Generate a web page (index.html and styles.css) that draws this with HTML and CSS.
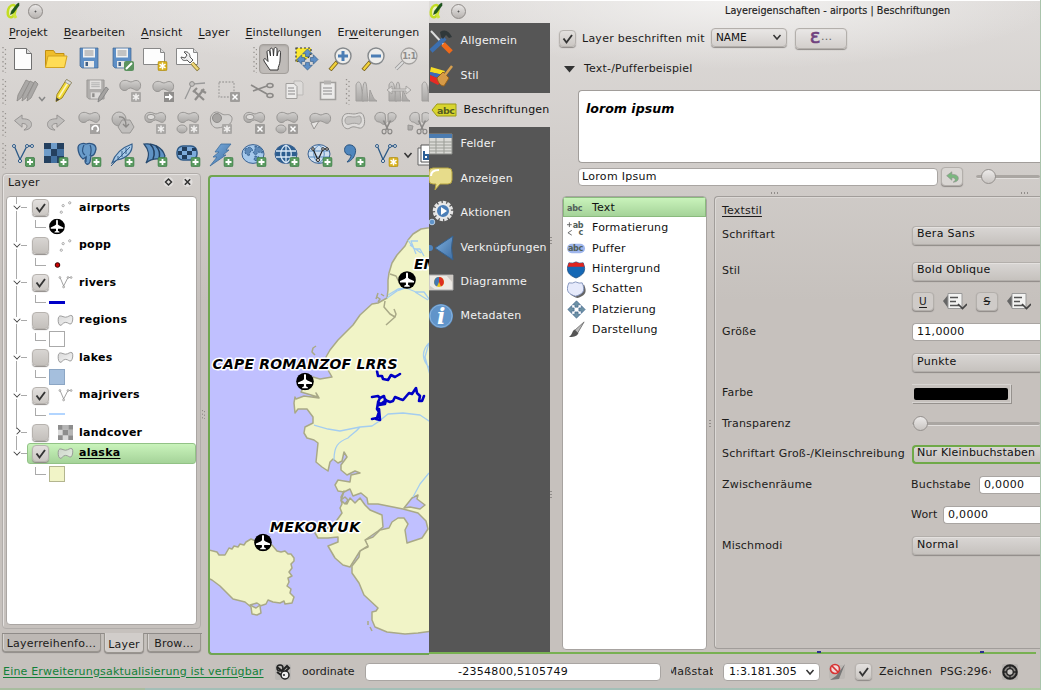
FILE: index.html
```html
<!DOCTYPE html>
<html lang="de">
<head>
<meta charset="utf-8">
<title>Layereigenschaften - airports | Beschriftungen</title>
<link rel="stylesheet" href="styles.css">
</head>
<body>
<svg class="defs" width="0" height="0" aria-hidden="true">
<defs>
<linearGradient id="gGrey" x1="0" y1="0" x2="0" y2="1"><stop offset="0" stop-color="#d2d0ce"/><stop offset="1" stop-color="#a9a7a5"/></linearGradient>
<linearGradient id="gLight" x1="0" y1="0" x2="1" y2="1"><stop offset="0" stop-color="#cfcfcf"/><stop offset="1" stop-color="#f2f2f2"/></linearGradient>
<linearGradient id="gBlue" x1="0" y1="0" x2="1" y2="1"><stop offset="0" stop-color="#7fb0de"/><stop offset="1" stop-color="#3d6ea5"/></linearGradient>
</defs>
<symbol id="plus" viewBox="0 0 10 10"><rect x=".4" y=".4" width="9.2" height="9.2" rx="1.5" fill="#5a9a60" stroke="#3d7c48" stroke-width=".8"/><path d="M5 2v6M2 5h6" stroke="#fff" stroke-width="1.8"/></symbol>
<symbol id="star" viewBox="0 0 10 10"><rect x=".4" y=".4" width="9.2" height="9.2" rx="1.5" fill="#d9b21c" stroke="#b08d10" stroke-width=".8"/><path d="M5 1.5v7M2 3.2l6 3.6M8 3.2L2 6.800" stroke="#fff" stroke-width="1.5"/></symbol>
<symbol id="gstar" viewBox="0 0 10 10"><rect width="10" height="10" rx="1" fill="#aaa8a6"/><path d="M5 1.500v7M2 3.200l6 3.600M8 3.200L2 6.800" stroke="#f1f0ef" stroke-width="1.500"/></symbol>
<symbol id="gx" viewBox="0 0 10 10"><rect width="10" height="10" rx="1" fill="#9f9d9b"/><path d="M2.500 2.500l5 5M7.500 2.500l-5 5" stroke="#fff" stroke-width="1.500"/></symbol>
<symbol id="blob" viewBox="0 0 24 14"><path d="M2 5C3 1 8 .5 11 2.500c3 1.500 4-1 7-1 5 0 5.500 6 3.500 8.500-3 3.500-5-.5-9-1-3 0-3 3-6.500 2.500C2.500 11 1.500 8 2 5z" fill="url(#gGrey)" stroke="#989694"/></symbol>
<symbol id="vec" viewBox="0 0 24 24"><path d="M3.500 4.500l5.500 13L16 4h4" fill="none" stroke="currentColor" stroke-width="1.300"/><g fill="#e8e6e4" stroke="currentColor"><circle cx="3" cy="4" r="1.500"/><circle cx="9" cy="19" r="1.600"/><circle cx="16" cy="4" r="1.500"/><circle cx="21" cy="4" r="1.500"/></g></symbol>
<symbol id="floppy" viewBox="0 0 20 22"><path d="M1 1h18v20H3l-2-2z" fill="currentColor" stroke="#3e648f" stroke-opacity=".7"/><path d="M4 1.500h12v9H4z" fill="#f2f2f2"/><path d="M5.500 4h9M5.500 6h9M5.500 8h9" stroke="#888" stroke-width=".9"/><path d="M5 14h10v6.500H5z" fill="#e9e9e9"/><path d="M6.500 15h2.500v4H6.500z" fill="#3f5f85"/></symbol>
<symbol id="gfloppy" viewBox="0 0 20 22"><path d="M1 1h18v20H3l-2-2z" fill="#b0aeac" stroke="#9a9896"/><path d="M4 1.500h12v9H4z" fill="#e2e0de"/><path d="M5.500 4h9M5.500 6h9M5.500 8h9" stroke="#aaa" stroke-width=".9"/><path d="M5 14h10v6.500H5z" fill="#dddbd9"/><path d="M6.500 15h2.500v4H6.500z" fill="#8f8d8b"/></symbol>
<symbol id="handle" viewBox="0 0 5 27"><path d="M1.500 1v26M4 3v24" stroke="#96928e" stroke-width="1.300" stroke-dasharray="1.300 3.400"/></symbol>
<symbol id="chev" viewBox="0 0 10 8"><path d="M1.500 2L5 6l3.500-4" fill="none" stroke="#333" stroke-width="1.500"/></symbol>
<symbol id="airport" viewBox="0 0 18 18"><circle cx="9" cy="9" r="8.800" fill="#000"/><path d="M9 1.500c.8 0 1 .8 1 1.700v3.600l1.500 1.200 4.500 2v1.500h-5.800l-.2 2.300 1.800 1v.9H6.200v-.9l1.800-1-.2-2.300H2V10l4.500-2L8 6.800V3.200c0-.9.200-1.700 1-1.700z" fill="#fff"/></symbol>
<symbol id="qgis" viewBox="0 0 14 18"><path d="M7.500 3C4 3 2 6.500 1.800 10c-.2 3.500 1 5.500 3.400 5.200 3.800-.5 6.300-12.200 2.300-12.200z" fill="#eef3c0" stroke="#c3dd22" stroke-width="2.600"/><path d="M7 10.500l3 5.500" stroke="#cfe63c" stroke-width="2.800"/><path d="M4.500 12.500l1-3.500L11 2l2-1v2.500L7.500 11z" fill="#1c5a1c" stroke="#143f14" stroke-width=".5"/></symbol>
<symbol id="lens" viewBox="0 0 24 24"><path d="M9.500 14.500L2 23" stroke="#77601a" stroke-width="4"/><path d="M8.500 15.500L2.500 22.500" stroke="#f2d23a" stroke-width="2.400"/><circle cx="15" cy="9" r="8" fill="#eeeeec" stroke="#85898c" stroke-width="1.400"/></symbol>
<symbol id="globe" viewBox="0 0 24 20"><ellipse cx="12" cy="10" rx="11" ry="9.400" fill="currentColor" stroke="#3a6190"/></symbol>
<symbol id="scissor" viewBox="0 0 12 12"><path d="M3 0l4 8M9 0L5 8" stroke="#8b8987" stroke-width="1.400"/><ellipse cx="3.500" cy="9.500" rx="1.700" ry="2" fill="none" stroke="#8b8987"/><ellipse cx="8.500" cy="9.500" rx="1.700" ry="2" fill="none" stroke="#8b8987"/></symbol>
<symbol id="hist" viewBox="0 0 24 24"><path d="M2 22V6c1-4 4-4 5 0l1 6 2 10z" fill="url(#gGrey)" stroke="#a19f9d"/><path d="M8 22c0-8 1-19 3-19s2 12 3 19zM15 22l1-11c3 7 4 10 7 11z" fill="url(#gGrey)" stroke="#a19f9d"/></symbol>
<symbol id="four" viewBox="0 0 24 24"><g fill="currentColor" stroke="#315a85" stroke-width=".7"><path d="M12 1l5 5h-3v3h-4V6H7z"/><path d="M12 23l5-5h-3v-3h-4v3H7z"/><path d="M1 12l5-5v3h3v4H6v3z"/><path d="M23 12l-5-5v3h-3v4h3v3z"/></g></symbol>
<symbol id="undo" viewBox="0 0 20 18"><path d="M1 7l8-6v4c8 0 10 3 10 6 0 4-4 6-8 6 5-3 4-7-2-7v4z" fill="currentColor" stroke="#8f8d8b" stroke-width=".9"/></symbol>
<symbol id="rasterIcon" viewBox="0 0 16 16"><path d="M0 0h16v16H0z" fill="#dadada"/><path d="M0 0h5v5H0zM11 0h5v5h-5zM5 5h6v6H5zM0 11h5v5H0zM11 11h5v5h-5z" fill="#8d8d8d"/><path d="M5 0h6v5H5zM11 5h5v6h-5z" fill="#b5b5b5"/></symbol>
<symbol id="points" viewBox="0 0 16 16"><g fill="#fff" stroke="#999" stroke-width=".9"><circle cx="3.500" cy="13" r="1.200"/><circle cx="5.500" cy="6" r="1.200"/><circle cx="12.500" cy="3" r="1.200"/></g></symbol>
<symbol id="poly" viewBox="0 0 18 14"><path d="M1.500 4C3 .5 5 3 9 3.500c3 0 5-3 7-1.500 1.500 2 .5 7-1 8.500-2 1-3-1.500-6-1.500s-4 4-6 3C1 10.500 1 6 1.500 4z" fill="url(#gLight)" fill-opacity=".8" stroke="#8f8f8f" stroke-width=".9"/></symbol>
<symbol id="definedIcon" viewBox="0 0 24 20"><path d="M0 9l5-6v13z" fill="#666"/><path d="M5 1.500h14v15H5z" fill="#f3f3f2" stroke="#999"/><path d="M7 5.500h8M7 9.500h6M7 13.500h9" stroke="#555" stroke-width="1.500"/><path d="M15 12l4.500 4.500L24 12" fill="none" stroke="#444" stroke-width="1.700"/></symbol>
</svg>

<div class="screen">
<main class="app">
  <header class="titlebar"><svg width="14" height="18"><use href="#qgis"/></svg><span class="knob"></span></header>
  <nav class="menubar"><span><u>P</u>rojekt</span><span><u>B</u>earbeiten</span><span><u>A</u>nsicht</span><span><u>L</u>ayer</span><span><u>E</u>instellungen</span><span>Er<u>w</u>eiterungen</span></nav>

  <div class="toolbar">
    <svg class="grip"><use href="#handle"/></svg>
    <svg class="ic" viewBox="0 0 24 24"><path d="M3.500 1.500h12l5 5v16h-17z" fill="#fdfdfd" stroke="#707070"/><path d="M15.500 1.500v5h5" fill="#ddd" stroke="#707070"/></svg>
    <svg class="ic" viewBox="0 0 24 24"><path d="M1.500 20V3.500h8l2 3H20v3" fill="#efbd2a" stroke="#c08e12"/><path d="M1.500 20.500L4 9h19l-2.500 11.500z" fill="#ffdc55" stroke="#d3a320"/></svg>
    <svg class="ic blue" viewBox="0 0 24 24"><use href="#floppy" x="2" y="0" width="20" height="22"/></svg>
    <svg class="ic blue" viewBox="0 0 24 24"><use href="#floppy" x="2" y="0" width="20" height="22"/><rect x="14" y="14" width="10" height="10" rx="2" fill="#5b9360"/><path d="M16 22l6-6" stroke="#fff" stroke-width="2"/></svg>
    <svg class="ic" viewBox="0 0 24 24"><path d="M.5 1.500h17l4 4v12H.5z" fill="#fdfdfd" stroke="#888"/><path d="M17.500 1.500v4h4" fill="#ddd" stroke="#888"/><use href="#star" x="14.500" y="14" width="10" height="10"/></svg>
    <svg class="ic" viewBox="0 0 24 24"><path d="M.5 1.500h17l4 4v12H.5z" fill="#fdfdfd" stroke="#888"/><path d="M17.500 1.500v4h4" fill="#ddd" stroke="#888"/><path d="M8 5l3 3-2 3-4-1c1 4 4 4 6 3l3 3 3-3-3-3c0-4-3-6-6-5z" fill="#eee" stroke="#555"/><path d="M16 16l6.500 7" stroke="#80702a" stroke-width="4"/><path d="M16 16l6 6.500" stroke="#f0d878" stroke-width="2.500"/></svg>
    <span class="gap"></span>
    <svg class="grip"><use href="#handle"/></svg>
    <span class="pressed"><svg class="ic" viewBox="0 0 24 24"><path d="M8 23L2 14c-1-3 1.500-3 3-.5l1 1L5 5c0-2 2.300-2 2.800 0l.7 4L8 3c0-2.500 2.500-2.500 3 0l.5 6 .5-7c.3-2 2.700-2 3 0v7l1-4c.5-2 2.700-1.500 2.500.5L18 14c-.2 4-2 5-2 9z" fill="#fff" stroke="#333" stroke-width="1"/></svg></span>
    <svg class="ic blue" viewBox="0 0 24 24"><path d="M1 1h15v6l-4 5H6l-4 3H1z" fill="#fbe831" stroke="#333" stroke-width="1.200" stroke-dasharray="2 2"/><use href="#four" x="1" y="1" width="23" height="23"/></svg>
    <svg class="ic" viewBox="0 0 24 24"><use href="#lens"/><path d="M15 4v10M10 9h10" stroke="#4c7eb5" stroke-width="3"/></svg>
    <svg class="ic" viewBox="0 0 24 24"><use href="#lens"/><path d="M10 9h10" stroke="#4c7eb5" stroke-width="3"/></svg>
    <svg class="ic" viewBox="0 0 24 24"><path d="M9 15l-7 7" stroke="#999" stroke-width="3.500"/><path d="M9 15l-7 7" stroke="#ddd" stroke-width="1.800"/><circle cx="15" cy="9" r="8" fill="#e4e2e0" stroke="#a3a19f" stroke-width="1.300"/><text x="15" y="12.300" class="one">1:1</text></svg>
  </div>

  <div class="toolbar second">
    <svg class="grip"><use href="#handle"/></svg>
    <svg class="ic wide" viewBox="0 0 33 24"><g fill="#aaa8a6" stroke="#8b8987" stroke-width=".8"><path d="M2 22l1-6L11 1l4 2L6 19z"/><path d="M7 22l1-6L15 2l4 2-8 15z"/><path d="M12 22l1-6 7-14 3 3-7 14z"/></g><path d="M24 18l3 3.500 3-3.500" fill="none" stroke="#888" stroke-width="1.500"/></svg>
    <svg class="ic" viewBox="0 0 24 24"><path d="M4 22.500l1-7L14.500.5l5 3L10 19z" fill="#f0d936" stroke="#9b8420"/><path d="M17 2L7 18" stroke="#fff" stroke-opacity=".7" stroke-width="1.500"/><path d="M4 22.500l.5-4 3 2z" fill="#444"/><path d="M14.500.5l5 3-1.500 2.500-5-3z" fill="#ddd" stroke="#888" stroke-width=".7"/></svg>
    <svg class="ic" viewBox="0 0 24 24"><use href="#gfloppy" x="1" y="0" width="19" height="21"/><path d="M13 23l1-5L21 8l2.500 2-6.500 10z" fill="#a5a3a1" stroke="#888"/></svg>
    <svg class="ic" viewBox="0 0 24 24"><use href="#blob" x="0" y="0" width="24" height="14"/><use href="#gstar" x="13" y="13" width="10" height="10"/></svg>
    <svg class="ic" viewBox="0 0 24 24"><use href="#blob" x="0" y="1" width="24" height="14"/><path d="M13 13h10v10H13z" fill="#8f8d8b"/><path d="M14 17h4v-2.500l4 3.500-4 3.500V19h-4z" fill="#fff"/></svg>
    <svg class="ic" viewBox="0 0 24 24"><path d="M1 20L8 5l13-1" fill="none" stroke="#999" stroke-width="1.300"/><circle cx="8" cy="5" r="2.400" fill="#c4c2c0" stroke="#8f8d8b"/><path d="M10 12l10 9M20 10L11 21M9 13l4-4M17 11l5 3" stroke="#8f8d8b" stroke-width="2.200"/></svg>
    <svg class="ic" viewBox="0 0 24 24"><path d="M2 3h15v15H2z" fill="none" stroke="#a5a3a1" stroke-width="1.300" stroke-dasharray="1.800 1.400"/><use href="#gx" x="13" y="13" width="10" height="10"/></svg>
    <svg class="ic" viewBox="0 0 24 24"><path d="M1 6l16 9M3 12l14-5" stroke="#8b8987" stroke-width="1.700"/><ellipse cx="20" cy="6.500" rx="3" ry="2" fill="none" stroke="#8b8987" stroke-width="1.600"/><ellipse cx="20" cy="16.500" rx="3" ry="2" fill="none" stroke="#8b8987" stroke-width="1.600"/></svg>
    <svg class="ic" viewBox="0 0 24 24"><path d="M11 2h7l2 2v12h-9z" fill="#dddbd9" stroke="#bbb9b7"/><path d="M3 4.500h8l3 3v12H3z" fill="#ecebea" stroke="#a19f9d"/><path d="M5 9h6M5 12h7M5 15h7" stroke="#aaa" stroke-width="1.300"/></svg>
    <svg class="ic" viewBox="0 0 24 24"><path d="M4.500 3.500h15v17h-15z" fill="#ecebea" stroke="#a19f9d" stroke-width="1.600"/><path d="M8 1.500h7v4H8z" fill="#b5b3b1"/><path d="M7 9h9M7 12h9M7 15h9" stroke="#aaa" stroke-width="1.300"/></svg>
    <svg class="grip tight"><use href="#handle"/></svg>
    <svg class="ic" viewBox="0 0 24 24"><use href="#hist"/></svg>
    <svg class="ic" viewBox="0 0 24 24"><use href="#hist"/><path d="M0 11l5-4v3h14V7l5 4-5 4v-3H5v3z" fill="#dddbd9" stroke="#a19f9d" stroke-width=".9"/></svg>
    <svg class="ic" viewBox="0 0 24 24"><use href="#hist"/></svg>
  </div>

  <div class="toolbar">
    <svg class="grip"><use href="#handle"/></svg>
    <svg class="ic silver" viewBox="0 0 24 24"><use href="#undo" x="2" y="3" width="20" height="17"/></svg>
    <svg class="ic silver flip" viewBox="0 0 24 24"><use href="#undo" x="2" y="3" width="20" height="17"/></svg>
    <svg class="ic" viewBox="0 0 24 24"><use href="#blob" x="0" y="0" width="24" height="14"/><path d="M13 13h10v10H13z" fill="#a3a19f"/><path d="M15.500 19a3 3 0 1 1 4 1.500" fill="none" stroke="#fff" stroke-width="1.700"/></svg>
    <svg class="ic" viewBox="0 0 24 24"><circle cx="9" cy="8" r="7" fill="url(#gGrey)" stroke="#989694"/><path d="M12 9h8l4 7-4 6h-8l-4-6z" fill="#c1bfbd" stroke="#989694"/><path d="M9 6c5-1 7 3 7 9M13 13l3 3 3-3" fill="none" stroke="#8b8987" stroke-width="1.300"/></svg>
    <svg class="ic" viewBox="0 0 24 24"><use href="#blob" x="0" y="0" width="24" height="14"/><ellipse cx="8" cy="6" rx="4" ry="2.600" fill="#dedcda" stroke="#989694"/><use href="#gstar" x="13" y="13" width="10" height="10"/></svg>
    <svg class="ic" viewBox="0 0 24 24"><use href="#blob" x="0" y="0" width="24" height="14"/><ellipse cx="6" cy="18" rx="5" ry="4" fill="url(#gGrey)" stroke="#989694"/><use href="#gstar" x="13" y="13" width="10" height="10"/></svg>
    <svg class="ic" viewBox="0 0 24 24"><path d="M2 5c3-6 8-4 11-2s6-1 9 2-1 9-3 9-6 3-11 3S0 10 2 5z" fill="#d3d1cf" stroke="#989694"/><circle cx="8" cy="7" r="4.500" fill="#a7a5a3" stroke="#8f8d8b"/><use href="#gstar" x="13" y="13" width="10" height="10"/></svg>
    <svg class="ic" viewBox="0 0 24 24"><use href="#blob" x="0" y="0" width="24" height="14"/><ellipse cx="8" cy="6" rx="4" ry="2.600" fill="#dedcda" stroke="#989694"/><use href="#gx" x="13" y="13" width="10" height="10"/></svg>
    <svg class="ic" viewBox="0 0 24 24"><use href="#blob" x="0" y="0" width="24" height="14"/><ellipse cx="6" cy="18" rx="5" ry="4" fill="url(#gGrey)" stroke="#989694"/><use href="#gx" x="13" y="13" width="10" height="10"/></svg>
    <svg class="ic" viewBox="0 0 24 24"><use href="#blob" x="0" y="1" width="24" height="14"/><path d="M3 12l8-2-5 8z" fill="#e6e4e2" stroke="#989694"/></svg>
    <svg class="ic" viewBox="0 0 24 24"><path d="M1 9C2 0 9 3 13 3s8-4 10 3-1 12-5 11-6-2-9 0-8 0-8-8z" fill="#dddbd9" stroke="#989694"/><path d="M4 9c1-5 5-3 9-3s6-3 7 1-1 7-3 6-5-1-8 0-5 0-5-4z" fill="#c5c3c1" stroke="#a3a19f"/></svg>
    <svg class="ic" viewBox="0 0 24 24"><path d="M1 5c2-5 8-4 10-2l1 9c-2 4-5-1-7-1S0 9 1 5zM14 3c3-3 9-1 8 3s-5 6-8 5z" fill="url(#gGrey)" stroke="#989694"/><use href="#scissor" x="6" y="9" width="14" height="15"/></svg>
    <svg class="ic" viewBox="0 0 24 24"><path d="M3 5c2-5 8-4 9-2l1 9c-2 4-5-1-7-1S2 9 3 5zM15 3c3-3 9-1 8 3s-5 6-8 5zM1 14l5 1-1 4-4 0z" fill="url(#gGrey)" stroke="#989694"/><use href="#scissor" x="8" y="9" width="14" height="15"/></svg>
  </div>

  <div class="toolbar">
    <svg class="grip"><use href="#handle"/></svg>
    <svg class="ic navy" viewBox="0 0 24 24"><use href="#vec" x="-1" y="-1" width="26" height="24"/><use href="#plus" x="14" y="14" width="10" height="10"/></svg>
    <svg class="ic" viewBox="0 0 24 24"><path d="M0 0h20v20H0z" fill="#6f9cc9"/><path d="M0 0h7v6H0zM13 0h7v6h-7zM7 6h6v7H7zM0 13h7v7H0zM13 13h7v7h-7z" fill="#24405f"/><path d="M13 6h7v7h-7zM7 13h6v7H7z" fill="#4471a0"/><use href="#plus" x="14.500" y="14" width="10" height="10"/></svg>
    <svg class="ic" viewBox="0 0 24 24"><path d="M1 5c0-5 6-5 8-4 3-1 10-1 10 5-1 5-3 7-5 7l-1 6c-2 4-5 2-5-1l1-4-3 2C3 14 1 9 1 5z" fill="#6a9cca" stroke="#2e5582" stroke-width="1.300"/><path d="M7 2c-2 4-2 8 1 10M13 2c2 4 1 8 0 11M9 14v5" fill="none" stroke="#2e5582" stroke-width="1.200"/><use href="#plus" x="14.500" y="14" width="10" height="10"/></svg>
    <svg class="ic" viewBox="0 0 24 24"><path d="M2 20C4 14 8 6 22 1c1 8-5 14-15 16z" fill="#a9cae8" stroke="#36608d" stroke-width="1.200"/><path d="M1 23L20 4M8 13v4M12 8v6M16 5v6" stroke="#36608d"/><use href="#plus" x="14.500" y="14" width="10" height="10"/></svg>
    <svg class="ic" viewBox="0 0 24 24"><path d="M1 1c8-1 18 2 21 12l-2 4C14 15 8 16 3 20 7 12 6 7 1 1z" fill="#5f92c4" stroke="#274a70" stroke-width="1.200"/><path d="M7 1c5 5 5 10 3 15M13 3c4 4 4 9 3 13" fill="none" stroke="#213f60" stroke-width="1.500"/><use href="#plus" x="14.500" y="14" width="10" height="10"/></svg>
    <svg class="ic" viewBox="0 0 24 24"><rect x="1" y="3" width="20" height="14" rx="6" fill="#7dabdb" stroke="#2f5a86" stroke-width="1.500"/><path d="M6 4h5v4H6zM11 8h5v4h-5zM6 12h5v4H6zM16 5h4v3h-4zM2 8h4v4H2z" fill="#223e5d"/><use href="#plus" x="14.500" y="14" width="10" height="10"/></svg>
    <svg class="ic" viewBox="0 0 24 24"><path d="M12 1h10l-5 6h3l-6 5h3L1 23l7-9H4l6-5H6z" fill="url(#gBlue)" stroke="#3f6e9e" stroke-width=".8"/><use href="#plus" x="14.500" y="14" width="10" height="10"/></svg>
    <svg class="ic pale" viewBox="0 0 24 24"><use href="#globe" y="1" x="-1" width="24" height="20"/><path d="M3 6l5-2 3 3-3 2-1 4-4-3zM13 3l6 2 2 5-5-1-2 3-3-2 2-3zM13 13l4 1-2 4-3-1z" fill="#5d89b8" stroke="#3a6594" stroke-dasharray="2 1"/><use href="#plus" x="14.500" y="14" width="10" height="10"/></svg>
    <svg class="ic deep" viewBox="0 0 24 24"><use href="#globe" y="1" x="-1" width="24" height="20"/><path d="M1 8h20M1 14h20M11 2v18M11 2c-7 4-7 14 0 18M11 2c7 4 7 14 0 18" fill="none" stroke="#d9e8f6" stroke-width="1.300"/><use href="#plus" x="14.500" y="14" width="10" height="10"/></svg>
    <svg class="ic frost" viewBox="0 0 24 24"><use href="#globe" y="1" x="-1" width="24" height="20"/><path d="M1 8h20M1 14h20M11 2c-7 4-7 14 0 18M11 2c7 4 7 14 0 18" fill="none" stroke="#5d8fc2"/><path d="M5 6l5 11 5-11h4" fill="none" stroke="#222" stroke-width="1.200"/><g fill="#fff" stroke="#222"><circle cx="5" cy="6" r="1.300"/><circle cx="10" cy="17" r="1.500"/><circle cx="15" cy="6" r="1.300"/><circle cx="19" cy="6" r="1.300"/></g><use href="#plus" x="14.500" y="14" width="10" height="10"/></svg>
    <svg class="ic" viewBox="0 0 24 24"><path d="M7 2c6-1 9 4 7 9-1 4-5 8-8 8 3-3 4-5 4-7-8 1-8-9-3-10z" fill="#4f86bd" stroke="#2c5580"/><use href="#plus" x="14.500" y="14" width="10" height="10"/></svg>
    <svg class="ic navy" viewBox="0 0 24 24"><use href="#vec" x="-1" y="-1" width="26" height="24"/><use href="#star" x="14.500" y="14" width="10" height="10"/></svg>
    <svg class="more"><use href="#chev"/></svg>
    <svg class="ic" viewBox="0 0 24 24"><path d="M1 5h16v17H1z" fill="#f4f4f4" stroke="#666"/><path d="M4 2h16v17H4z" fill="#fff" stroke="#555"/><path d="M7 8v8h4v-4H7" fill="none" stroke="#2d5f95" stroke-width="2"/></svg>
  </div>

  <div class="workspace">
    <div class="dockcol">
      <section class="dock">
        <h2>Layer<svg width="30" height="12" viewBox="0 0 30 12"><circle cx="5.500" cy="6" r="5" fill="#e2dfdd"/><circle cx="24.500" cy="6" r="5" fill="#e2dfdd"/><path d="M5.500 3L8.500 6l-3 3-3-3z" fill="none" stroke="#333" stroke-width="1.500"/><path d="M21.800 3.300l5.400 5.400M27.200 3.300l-5.400 5.400" stroke="#333" stroke-width="1.600"/></svg></h2>
        <div class="tree">
          <div class="row"><i class="ex"></i><b class="cb on"></b><svg class="gi"><use href="#points"/></svg><span>airports</span></div>
          <div class="leg"><i></i><svg width="16" height="17" viewBox="0 0 18 18"><use href="#airport"/></svg></div>
          <div class="row"><i class="ex"></i><b class="cb"></b><svg class="gi"><use href="#points"/></svg><span>popp</span></div>
          <div class="leg"><i></i><svg width="17" height="16"><circle cx="8.500" cy="9" r="2.300" fill="#c00" stroke="#300"/></svg></div>
          <div class="row"><i class="ex"></i><b class="cb on"></b><svg class="gi vecg"><use href="#vec"/></svg><span>rivers</span></div>
          <div class="leg"><i></i><svg width="16" height="16"><path d="M0 8.500h16" stroke="#0000c8" stroke-width="3"/></svg></div>
          <div class="row"><i class="ex"></i><b class="cb"></b><svg class="gi"><use href="#poly"/></svg><span>regions</span></div>
          <div class="leg"><i></i><em class="sw white"></em></div>
          <div class="row"><i class="ex"></i><b class="cb"></b><svg class="gi"><use href="#poly"/></svg><span>lakes</span></div>
          <div class="leg"><i></i><em class="sw lake"></em></div>
          <div class="row"><i class="ex"></i><b class="cb on"></b><svg class="gi vecg"><use href="#vec"/></svg><span>majrivers</span></div>
          <div class="leg"><i></i><svg width="16" height="16"><path d="M0 8h16" stroke="#b2d5ff" stroke-width="2"/></svg></div>
          <div class="row"><i class="ex closed"></i><b class="cb"></b><svg class="gi"><use href="#rasterIcon"/></svg><span>landcover</span></div>
          <div class="row sel"><i class="ex"></i><div class="hl"><b class="cb on"></b><svg class="gi"><use href="#poly"/></svg><span><u>alaska</u></span></div></div>
          <div class="leg"><i></i><em class="sw land"></em></div>
        </div>
      </section>
      <div class="tabs"><span class="t1">Layerreihenfo…</span><span class="t2">Layer</span><span class="t3">Brow…</span></div>
    </div>
    <div class="vsplit"><svg width="4" height="9"><path d="M1.500 0v9M3.500 1v8" stroke="#8f8b88" stroke-dasharray="1.200 2.400"/></svg></div>
    <svg class="map" viewBox="210 177 219 476" preserveAspectRatio="none">
      <g class="coast">
        <path d="M440 226L421 229 413 234 408 240 405 246 397 255 392 263 389 273 388 280 388 290 387 298 378 303 372 304 360 315 353 325 338 340 330 350 326 357 328 370 332 377 320 379 313 377 306 384 302 390 301 392 318 397 316 393 319 398 304 396 296 399 295 397 294 403 295 413 298 409 307 409 313 417 313 423 305 427 304 433 307 438 314 440 318 443 316 462 322 467 328 471 330 462 333 459 338 463 342 461 344 452 347 457 341 465 341 470 347 475 355 471 360 473 351 475 350 482 338 480 335 485 338 491 344 492 350 489 353 496 361 493 367 498 368 504 378 504 388 506 403 509 418 513 426 521 428 529 422 538 407 543 405 530 408 524 404 518 398 518 392 522 389 528 380 530 373 537 365 540 368 547 360 550 359 557 352 566 352 573 359 583 364 595 378 608 376 611 372 612 372 620 375 627 387 632 405 634 418 633 440 630z"/>
        <path d="M344 491L341 497 342 504 340 508 342 513 337 520 330 527 315 533 318 538 328 538 338 537 338 542 328 546 335 558 343 565 350 567 360 551 368 546 365 540 378 531 383 527 382 515 370 510 365 505 360 498 355 503 350 498 347 504 341 501z"/>
        <path d="M205 549L217 552 219 555 225 555 229 548 232 549 234 546 238 547 240 544 244 545 246 542 251 539 258 542 272 545 277 551 281 552 285 551 288 554 291 554 294 558 294 561 291 564 292 568 289 572 292 576 288 578 289 582 287 586 291 589 290 593 294 597 292 603 285 604 284 601 280 603 273 602 268 600 266 604 260 606 261 613 257 615 252 614 251 607 245 602 233 599 220 586 212 580 205 577z"/>
        <path class="water" d="M404 508L412 498 418 495 417 499 425 505 420 509 410 507zM341 500l4-3 3 3-3 4zM250 605l7-2 3 2-4 3z"/>
        <path class="line" d="M385 301l-1 6 6 7 5 3 1-3-2-5M395 317l-9 8M390 274l6 2 4 8M378 302l2-3-3-2M381 294l3 2M376 299l2-6M315 355l-3-3 1-4 3-2M368 621l0 4M370 627l2 4M307 379l-4 4"/>
      </g>
      <path class="river" d="M387 298l10-7 9-3 10 4 8 0 8 11M388 295l10-6 9-1M408 240l6 9 6 0 4 7M410 245l11 8M430 375l-5-18 4-14M429 343c-8 8-7 18 1 25M314 425l14 4 12 2 20-4 12-1 6-4 10-8 15-1 17 2 12 8M360 427c-4 5-8 7-12 11-10 4-14 8-14 22M429 473l-9 11-7 13M415 292l13 8M418 241l-7 0 5 13"/>
      <path class="major" d="M377 371l1 5 4 0 1 3 5 1 3-5 4 2 5-3M372 397l6-1 2 2 4-2 1 4 5 2 3-1 2-4 5 2 3 1 6-7 3 1 4-6 1 5 3 3-1 5 3 0 2-5M380 398l-2 4 3 2 5-4-1 4-6 1M378 403l-1 6 2 3-2 6-5 1M379 409l1 11-4-1"/>
      <use href="#airport" x="398" y="271" width="18" height="18"/><use href="#airport" x="296" y="372.500" width="18" height="18"/><use href="#airport" x="254" y="533.500" width="18" height="18"/>
      <g class="labels"><text x="414" y="269">EMMONAK</text><text x="212.500" y="368.500" textLength="185">CAPE ROMANZOF LRRS</text><text x="270" y="532" textLength="90">MEKORYUK</text></g>
    </svg>
  </div>
</main>

<section class="dialog">
  <header class="titlebar dt"><svg width="14" height="18"><use href="#qgis"/></svg><span class="knob"></span><span class="caption">Layereigenschaften - airports | Beschriftungen</span></header>
  <div class="dbody">
    <nav class="side">
      <a><svg viewBox="0 0 24 24"><path d="M2 2l13 14" stroke="#ddd" stroke-width="2"/><path d="M14 15l8 8" stroke="#ef6a1a" stroke-width="5"/><path d="M16 9L2 22" stroke="#3c6fb0" stroke-width="4.500"/><path d="M11 3c5-3 9-1 12 5l-3 1-3-3-3 4-2-2z" fill="#30383a"/></svg>Allgemein</a>
      <a><svg viewBox="0 0 24 24"><path d="M2 3l14 4-2 4L1 8z" fill="#f6dd26"/><path d="M1 8l14 3-2 5L1 11z" fill="#3d69bb"/><path d="M1 11l12 5-4 5L1 17z" fill="#e62a25"/><path d="M8 14l6-6 6 6-5 8c-3 0-6-3-7-8z" fill="#d69a46" stroke="#95601c"/><path d="M16 11l7-9" stroke="#d8a04e" stroke-width="2.500"/></svg>Stil</a>
      <a class="cur"><svg viewBox="0 0 24 24"><path d="M0 12l5-6h19v12H5z" fill="#d8d52e" stroke="#9c9a18"/><text x="5" y="15.500">abc</text></svg>Beschriftungen</a>
      <a><svg viewBox="0 0 24 24"><path d="M0 2h23v20H0z" fill="#dadad6" stroke="#8a8c88"/><path d="M0 2h23v4H0z" fill="#4c7cb0"/><path d="M0 10h23M0 13h23M0 16h23M0 19h23M7 6v16M15 6v16" stroke="#9b9d97"/></svg>Felder</a>
      <a><svg viewBox="0 0 24 24"><path d="M4 1h15q4 0 4 4v8q0 4-4 4h-8l-5 6 1-6H4q-4 0-4-4V5q0-4 4-4z" fill="#e7dc8b" stroke="#b5a440"/><path d="M2 9q0-6 8-6" fill="none" stroke="#fff" stroke-width="2"/></svg>Anzeigen</a>
      <a><svg viewBox="0 0 24 24"><circle cx="14" cy="10" r="8.500" fill="none" stroke="#e4e4e4" stroke-width="3.500" stroke-dasharray="3.200 1.200"/><circle cx="14" cy="10" r="7" fill="#4b7eb7" stroke="#e9e9e9" stroke-width="2"/><path d="M12 6l6 4-6 4z" fill="#fff"/><circle cx="3" cy="21" r="2.800" fill="#5f93c9" stroke="#b8cde2"/></svg>Aktionen</a>
      <a><svg viewBox="0 0 24 24"><path d="M6 12L24 0q-3 12 0 24z" fill="url(#gBlue)" stroke="#35618f"/><circle cx="1" cy="12" r="3" fill="#4f83bb"/></svg>Verknüpfungen</a>
      <a><svg viewBox="0 0 24 24"><path d="M0 5h24v15H0z" fill="#ece9e4" stroke="#aaa"/><path d="M0 15l7 5H0zM17 5l7 8V5z" fill="#cfcac4"/><circle cx="10" cy="12" r="5" fill="#e7c51f"/><path d="M10 12V7a5 5 0 0 0-2 9.500z" fill="#4275b2"/><path d="M10 12V7a5 5 0 0 1 2 9.500z" fill="#dd2d22"/></svg>Diagramme</a>
      <a><svg viewBox="0 0 24 24"><circle cx="12" cy="12" r="12" fill="#6094ca"/><circle cx="12" cy="12" r="11" fill="none" stroke="#88b1da"/><text x="8" y="20" class="info">i</text></svg>Metadaten</a>
    </nav>
    <div class="dsplit"><i></i><i></i></div>
    <div class="page">
      <div class="line1"><b class="cb big on"></b><label>Layer beschriften mit</label><span class="combo name">NAME<svg><use href="#chev"/></svg></span><span class="combo expr"><span>ε</span>...</span></div>
      <div class="line2"><svg width="11" height="8"><path d="M0 1h11L5.500 7.500z" fill="#333"/></svg>Text-/Pufferbeispiel</div>
      <div class="preview">lorom ipsum</div>
      <div class="line3"><span class="edit">Lorom Ipsum</span><span class="reset"><svg width="13" height="12"><use href="#undo"/></svg></span><span class="slider s1"><i></i></span></div>
      <div class="hdots"><i></i><i></i></div>
      <div class="lower">
        <div class="list">
          <a class="cur"><svg viewBox="0 0 20 20"><text x="0" y="13">abc</text></svg>Text</a>
          <a><svg viewBox="0 0 20 20"><text x="6" y="9">ab</text><text x="12" y="17">c</text><path d="M0 6h5M2.500 3.500v5M5 12l-4 2.500L5 17" fill="none" stroke="#666"/></svg>Formatierung</a>
          <a><svg viewBox="0 0 20 20"><rect x="0" y="5" width="19" height="10" rx="5" fill="#9fb6ec"/><text x="1" y="13">abc</text></svg>Puffer</a>
          <a><svg viewBox="0 0 20 20"><path d="M2 3q4 1 7.500-1Q13 4 17 3c4 9 0 13-7.500 16C2 16-2 12 2 3z" fill="#1568b5" stroke="#123f70" stroke-width=".7"/><path d="M2 3q4 1 7.500-1Q13 4 17 3l1.300 4H.7z" fill="#e0251f"/></svg>Hintergrund</a>
          <a><svg viewBox="0 0 20 20"><path d="M4 5q3 1 7-1 4 2 7 1c4 9 0 12-7 14-7-2-11-5-7-14z" fill="#666"/><path d="M2 3q4 1 7-1 4 2 7 1c4 9 0 12-7 14C2 15-2 12 2 3z" fill="#e6eafb" stroke="#8292bc"/></svg>Schatten</a>
          <a class="place"><svg viewBox="0 0 20 20"><use href="#four"/></svg>Platzierung</a>
          <a><svg viewBox="0 0 20 20"><path d="M18 2l-7 12-3-3z" fill="#bbb" stroke="#777"/><path d="M8 10l4 4c-2 4-6 4-10 4 4-3 3-6 6-8z" fill="#555"/></svg>Darstellung</a>
        </div>
        <div class="psplit"><i></i></div>
        <div class="form">
          <div class="f head"><u>Textstil</u></div>
          <div class="f f1"><label>Schriftart</label><span class="combo w">Bera Sans</span></div>
          <div class="f f2"><label>Stil</label><span class="combo w">Bold Oblique</span></div>
          <div class="f f3"><label></label><span class="tb"><u>U</u></span><svg><use href="#definedIcon"/></svg><span class="tb"><s>S</s></span><svg><use href="#definedIcon"/></svg></div>
          <div class="f"><label>Größe</label><span class="edit w">11,0000</span></div>
          <div class="f"><label></label><span class="combo w">Punkte</span></div>
          <div class="f"><label>Farbe</label><span class="colour"><i></i></span></div>
          <div class="f"><label>Transparenz</label><span class="slider s2"><i></i></span></div>
          <div class="f"><label>Schriftart Groß-/Kleinschreibung</label><span class="combo w focus">Nur Kleinbuchstaben</span></div>
          <div class="f"><label>Zwischenräume</label><span class="sub b1">Buchstabe</span><span class="edit w">0,0000</span></div>
          <div class="f"><label></label><span class="sub b2">Wort</span><span class="edit w">0,0000</span></div>
          <div class="f"><label>Mischmodi</label><span class="combo w">Normal</span></div>
        </div>
      </div>
    </div>
  </div>
  <div class="mapedge"><i></i><i></i></div>
</section>

<footer class="status">
  <a class="update">Eine Erweiterungsaktualisierung ist verfügbar</a>
  <svg class="mouse" width="18" height="18" viewBox="0 0 18 18"><rect x="1" y="1" width="16" height="16" rx="2" fill="#bab7b4"/><path d="M3 4l5 4 5-5 2 2-5 5M3 9l4 3" fill="none" stroke="#222" stroke-width="2"/><circle cx="6" cy="5" r="3" fill="none" stroke="#222" stroke-width="1.500"/><circle cx="11" cy="12" r="4" fill="#eee" stroke="#222" stroke-width="1.500"/><circle cx="10" cy="12" r="1" fill="#222"/></svg>
  <span class="coord">oordinate</span><span class="edit xy">-2354800,5105749</span>
  <span class="scalelab"><span>Maßstab</span></span><span class="edit scale">1:3.181.305<svg><use href="#chev"/></svg></span>
  <svg class="stop" width="18" height="18" viewBox="0 0 18 18"><rect x="1" y="2" width="16" height="14" rx="2" fill="#bdb9b5"/><path d="M17 1L8 13l-6 4 9-1z" fill="#777"/><circle cx="7" cy="6" r="4.500" fill="#f3dada" stroke="#d63333" stroke-width="1.700"/><path d="M4 3l6 6" stroke="#d63333" stroke-width="1.700"/></svg>
  <b class="cb big on"></b><span class="render">Zeichnen</span><span class="epsg">PSG:296‹</span>
  <svg class="world" width="18" height="18" viewBox="0 0 18 18"><rect x="1" y="1" width="16" height="16" rx="2" fill="#b5b1ae"/><circle cx="9" cy="9" r="6.800" fill="#8b8885" stroke="#222" stroke-width="2"/><path d="M2 9h4M12 9h4M9 2v4M9 12v4" stroke="#222" stroke-width="1.300"/><circle cx="9" cy="9" r="3.300" fill="#c9c6c3" stroke="#222" stroke-width="1.300"/></svg>
</footer>
<div class="below"></div>
</div>
</body>
</html>
```
FILE: styles.css
```css
* { box-sizing: border-box; }
body {
  margin: 0; width: 1041px; height: 690px; overflow: hidden;
  font: 11px/14px "DejaVu Sans", sans-serif; letter-spacing: .19px; color: #1c1b1a;
}
.defs { position: absolute; }
u { text-underline-offset: 1.5px; }
.screen {
  width: 1041px; height: 690px; display: grid;
  grid-template-columns: 429px minmax(0, 1fr); grid-template-rows: 655px 33px 2px;
  border-right: 1px solid #a9c3ab;
}
.app, .dialog { overflow: hidden; min-width: 0; border-top: 1px solid #fff; }
.app { background: radial-gradient(ellipse 330px 65px at 390px 0, #ebe9e8, transparent), linear-gradient(#dedbd9, #c6c1bd 300px); display: flex; flex-direction: column; }
.dialog { background: radial-gradient(ellipse 320px 68px at 306px 0, #f2f1f0, transparent), linear-gradient(#dedbd9, #c6c1bd 300px); display: flex; flex-direction: column; }

.titlebar { height: 22px; flex: none; display: flex; align-items: center; padding: 0 0 2px 6px; }
.knob { width: 15px; height: 15px; margin-left: 8px; border-radius: 50%; border: 1px solid #8e8a87; background: radial-gradient(circle, #555 0 .7px, transparent 1.2px), linear-gradient(#e8e6e5, #b7b3b0); }
.dt { padding-left: 0; }
.caption { font-size: 9.65px; margin-left: 259px; -webkit-text-stroke: .15px #222; letter-spacing: .03px; }
.menubar { height: 20px; flex: none; display: flex; gap: 15.9px; padding: 3px 0 0 9px; letter-spacing: .11px; white-space: nowrap; }

.toolbar { height: 32px; flex: none; display: flex; align-items: center; white-space: nowrap; }
.grip { width: 6.5px; height: 27px; flex: none; padding-left: 1.5px; }
.grip.tight { width: 5px; padding: 0; }
.ic { width: 24px; height: 24px; margin: 0 4.5px; flex: none; overflow: visible; }
.ic.wide { width: 33px; margin-left: 8px; margin-right: 0; }
.gap { width: 46px; flex: none; }
.pressed { width: 30px; height: 30px; margin: 0 1.5px; flex: none; border: 1px solid #a39f9b; border-radius: 4px; background: #bfbbb8; display: flex; justify-content: center; align-items: center; box-shadow: inset 0 1px 2px #a9a5a2; }
.pressed .ic { margin: 0; }
.more { width: 10px; height: 8px; flex: none; }
.blue { color: #5e8fc6; } .navy { color: #2c5a88; } .silver { color: #c1bfbd; }
.pale { color: #a6c9ec; } .deep { color: #2d5e90; } .frost { color: #cfdff0; }
.flip { transform: scaleX(-1); }
.one { font: bold 8.5px "DejaVu Sans", sans-serif; letter-spacing: -.5px; text-anchor: middle; fill: #8e8c8a; }

.workspace { flex: 1; min-height: 0; display: flex; padding-top: 2px; }
.dockcol { width: 201px; flex: none; padding: 0 0 0 2px; display: flex; flex-direction: column; }
.dock { height: 457px; border: 1px solid #b1adaa; border-radius: 4px; box-shadow: inset 1px 1px #e5e2e0; padding: 0 3px; width: 199px; }
.dock h2 { margin: 0; height: 22px; padding: 2px 4px 0 2px; font: inherit; display: flex; justify-content: space-between; }
.tree { height: 429px; border: 1px solid #aaa6a3; border-radius: 4px; padding-top: 1.5px; overflow: hidden; background: linear-gradient(#aaa, #aaa) 9px 0/1px 257px no-repeat #fff; }
.row { height: 18.75px; display: flex; align-items: center; font-weight: bold; letter-spacing: .25px; color: #000; }
.ex { width: 7px; height: 7px; margin-left: 6px; background: #fff; flex: none; position: relative; }
.ex::before { content: ""; position: absolute; left: .5px; top: -1px; width: 5px; height: 5px; border: solid #333; border-width: 0 1.5px 1.5px 0; transform: rotate(45deg) scale(.85); }
.ex.closed::before { transform: rotate(-45deg) scale(.85); }
.ex::after { content: ""; position: absolute; left: 8px; top: 3px; width: 6px; height: 1px; background: #aaa; }
.cb { width: 17px; height: 17px; flex: none; margin-left: 12px; border-radius: 4px; border: 1px solid #b7b3af; background: linear-gradient(#d8d5d2, #c4c0bc); box-shadow: 0 1px 1px #8d8986; }
.cb.on { background: url("data:image/svg+xml,%3Csvg xmlns='http://www.w3.org/2000/svg' viewBox='0 0 15 15'%3E%3Cpath d='M3.500 7.500l3 4L12 4' fill='none' stroke='%23343434' stroke-width='1.900'/%3E%3C/svg%3E"), linear-gradient(#e3e0de, #cbc7c3); }
.gi { width: 17px; height: 15px; margin-left: 8px; flex: none; color: #8c8c8c; }
.row span { margin-left: 5px; }
.leg { height: 18.75px; display: flex; align-items: center; padding-left: 28px; }
.leg i { width: 11px; height: 8px; margin: 0 3px 5px 0; border: solid #aaa; border-width: 0 0 1px 1px; }
.leg svg { overflow: visible; }
.sw { width: 16px; height: 16px; border: 1px solid #aaa; }
.lake { background: #a5bfdd; border-color: #8ca6c4; } .land { background: #f1f4c7; border-color: #b3b58f; } .white { background: #fff; }
.row.sel { height: 22px; }
.hl { margin-left: 7px; flex: 1; height: 21px; display: flex; align-items: center; border: 1px solid #92c286; border-radius: 3px; background: linear-gradient(#c9f3bb, #a5d399); }
.hl .cb { margin-left: 4px; }
.tabs { display: flex; margin-top: 4px; width: 200px; height: 22px; white-space: nowrap; border-top: 1px solid #8f8b88; }
.tabs span { height: 18px; padding-top: 3px; text-align: center; border: 1px solid #99958f; border-top: 0; border-radius: 0 0 4px 4px; background: #bdb8b4; box-shadow: 0 1px 1px #8f8b88, inset 1px 0 #d8d5d2; }
.tabs .t1 { width: 99px; } .tabs .t2 { width: 40px; height: 20px; margin: -1px 3px 0; padding-top: 5px; background: #d1cdca; } .tabs .t3 { width: 54px; }
.vsplit { width: 7px; flex: none; display: flex; align-items: center; }
.map { width: 221px; height: 480px; border: 2px solid #70a552; border-right: 0; border-radius: 4px 0 0 4px; background: #c0c0ff; flex: none; align-self: flex-end; }
.coast { fill: #f1f4c7; stroke: #a9a987; stroke-width: 1.5; stroke-linejoin: round; }
.coast .water { fill: #c0c0ff; } .coast .line { fill: none; }
.river { fill: none; stroke: #a4cdf0; stroke-width: 1.3; stroke-linejoin: round; }
.major { fill: none; stroke: #0000c4; stroke-width: 2.6; stroke-linejoin: round; stroke-linecap: round; }
.labels { font: italic bold 14px "DejaVu Sans", sans-serif; letter-spacing: 0; paint-order: stroke; stroke: #fff; stroke-width: 3px; stroke-linejoin: round; fill: #000; }

.dbody { display: flex; height: 629px; flex: none; }
.side { width: 121px; height: 629px; flex: none; background: #565656; display: flex; flex-direction: column; padding-top: 1px; }
.side a { height: 34.4px; flex: none; display: flex; align-items: center; gap: 7.500px; color: #f2f2f2; white-space: nowrap; }
.side svg { width: 24px; height: 24px; flex: none; overflow: visible; }
.side .cur { background: #d6d2d0; color: #111; padding-left: 3px; }
.side text { font: bold 9.5px "DejaVu Sans", sans-serif; letter-spacing: -.5px; fill: #555c22; }
.side .info { font: italic bold 22px "DejaVu Serif", serif; fill: #fff; }
.dsplit { width: 4px; flex: none; display: flex; flex-direction: column; justify-content: space-around; padding: 90px 0 30px; }
.dsplit i, .psplit i { width: 2px; height: 7px; background: repeating-linear-gradient(#918d8a 0 1px, transparent 1px 3px); }
.page { flex: 1; min-width: 0; padding-left: 5px; }
.line1 { display: flex; height: 30px; align-items: center; }
.cb.big { margin: 0; width: 17px; height: 17px; }
.line1 label { margin-left: 6px; padding-top: 1px; width: 129px; letter-spacing: .25px; white-space: nowrap; }
.combo { height: 19px; border: 1px solid #b3afab; border-radius: 4px; padding: 0 4px 2px; display: flex; align-items: center; background: linear-gradient(#d9d6d4, #c6c2be); box-shadow: 0 1px 1px #8e8a87, inset 0 1px #e4e1df; white-space: nowrap; letter-spacing: .28px; color: #111; }
.combo.name { width: 76px; font-size: 10.5px; letter-spacing: 0; padding-left: 4px; justify-content: space-between; background: linear-gradient(#e9e7e6, #d3cfcc); margin-bottom: 1px; }
.combo svg, .scale svg { width: 10px; height: 8px; flex: none; }
.combo.expr { width: 52px; height: 21px; margin-left: 8px; justify-content: center; background: linear-gradient(#e9e7e6, #d3cfcc); color: #666; }
.expr span { font: 20px/18px "DejaVu Sans", sans-serif; -webkit-text-stroke: .6px #70427e; color: #70427e; margin-top: -2px; }
.line2 { height: 30px; display: flex; align-items: center; gap: 9px; padding: 2px 0 0 5px; }
.preview { margin: 7px 0 0 19px; height: 73px; background: #fff; border: 1px solid #a19d9a; border-right: 0; border-radius: 4px 0 0 4px; padding: 10px 7px; font: italic bold 12.6px/15px "DejaVu Sans", sans-serif; letter-spacing: 0; color: #000; }
.line3 { display: flex; margin: 4px 0 0 19px; height: 19px; align-items: center; }
.edit { background: #fff; border: 1px solid #a9a5a2; border-radius: 4px; height: 18px; padding: 1px 4px; white-space: nowrap; letter-spacing: .3px; color: #111; }
.line3 .edit { width: 360px; padding-left: 3px; }
.reset { width: 22px; height: 19px; margin: 0 13px 0 3px; border: 1px solid #b3afab; border-radius: 4px; display: flex; align-items: center; justify-content: center; color: #7ab77f; box-shadow: 0 1px 1px #8e8a87; background: #d9d6d3; }
.slider { flex: 1; height: 4px; border-radius: 3px; background: #aaa6a2; border-bottom: 1px solid #e2dfdd; display: flex; align-items: center; }
.slider i { width: 15px; height: 15px; flex: none; border-radius: 50%; border: 1px solid #94908d; background: linear-gradient(#eceae9, #c9c5c2); }
.s1 i { margin-left: 5px; } .s2 i { margin-left: 1px; }
.hdots { height: 10px; display: flex; justify-content: space-between; align-items: center; padding: 4px 11px 0 212px; }
.hdots i { width: 8px; height: 2px; background: repeating-linear-gradient(90deg, #918d8a 0 1.500px, transparent 1.500px 3px); }
.lower { display: flex; height: 454px; padding-left: 3px; }
.list { width: 145px; background: #fff; border: 1px solid #a7a3a0; border-radius: 4px; flex: none; overflow: hidden; }
.list a { height: 20.3px; display: flex; align-items: center; gap: 6px; padding: 2px 0 0 4px; color: #111; letter-spacing: .2px; }
.list a.cur { background: linear-gradient(#c9f3bb, #a5d399); border: 1px solid #8aba7d; padding-left: 3px; }
.list svg { width: 19px; height: 19px; flex: none; }
.list text { font: bold 8.500px "DejaVu Sans", sans-serif; letter-spacing: -.3px; fill: #51605a; }
.list .place svg { color: #6d91a5; }
.psplit { width: 7px; flex: none; display: flex; align-items: center; padding-left: 2px; }
.form { flex: 1; min-width: 0; height: 453px; border: 1px solid #a19d9a; border-right: 0; border-radius: 4px 0 0 4px; box-shadow: inset 1px 1px #dcd9d6; padding: 4px 0 0 7px; }
.f { height: 30.5px; display: flex; align-items: center; }
.f label { width: 190px; flex: none; white-space: nowrap; }
.f.head { height: 19px; } .f.f1 { height: 30px; } .f.f2 { height: 42px; } .f.f3 { height: 25px; align-items: flex-start; }
.w { flex: 1; min-width: 0; border-right: 0; border-top-right-radius: 0; border-bottom-right-radius: 0; }
.focus { border: 2px solid #6fa948; border-right: 0; padding-left: 3px; box-shadow: none; letter-spacing: .18px; }
.tb { width: 22px; height: 19px; border: 1px solid #b3afab; border-radius: 4px; text-align: center; line-height: 16px; font-size: 10.5px; box-shadow: 0 1px 1px #8e8a87; background: #cfcbc8; }
.f3 svg { width: 24px; height: 20px; margin: 0 9px; flex: none; }
.colour { width: 99px; height: 19px; border: 1px solid #d7d4d1; border-width: 1px 1px 1px 0; box-shadow: 1px 1px #96928e; padding: 3px 2px; }
.colour i { display: block; height: 12px; background: #000; border-radius: 2px; }
.sub { flex: none; margin-left: -1px; } .b1 { width: 68px; } .b2 { width: 32px; }
.mapedge { height: 2px; border-top: 2px solid #78b052; width: 607px; display: flex; justify-content: space-between; padding: 0 52px 0 388px; }
.mapedge i { width: 4px; height: 2px; margin-top: -3px; background: #2a2f8f; }

.status { grid-column: 1 / 3; background: #c6c1bd; display: flex; align-items: center; padding-left: 3px; white-space: nowrap; letter-spacing: .3px; }
.update { color: #128038; text-decoration: underline; text-underline-offset: 2px; width: 271px; letter-spacing: .19px; }
.status svg { flex: none; }
.coord { width: 63px; margin-left: 10px; letter-spacing: 0; }
.xy { width: 296px; text-align: center; }
.scalelab { width: 42px; margin-left: 10px; overflow: hidden; display: flex; justify-content: center; }
.scale { width: 97px; margin-left: 10px; display: flex; justify-content: space-between; align-items: center; padding-left: 5px; letter-spacing: .1px; }
.stop { margin: 0 9px 0 8px; }
.render { margin-left: 7px; width: 61px; }
.epsg { width: 51px; overflow: hidden; letter-spacing: .2px; }
.world { margin-left: 10px; }
.below { grid-column: 1 / 3; background: linear-gradient(90deg, #a8bd9f 0 145px, #a3bfb7 145px 700px, #acc9a0); }
```
